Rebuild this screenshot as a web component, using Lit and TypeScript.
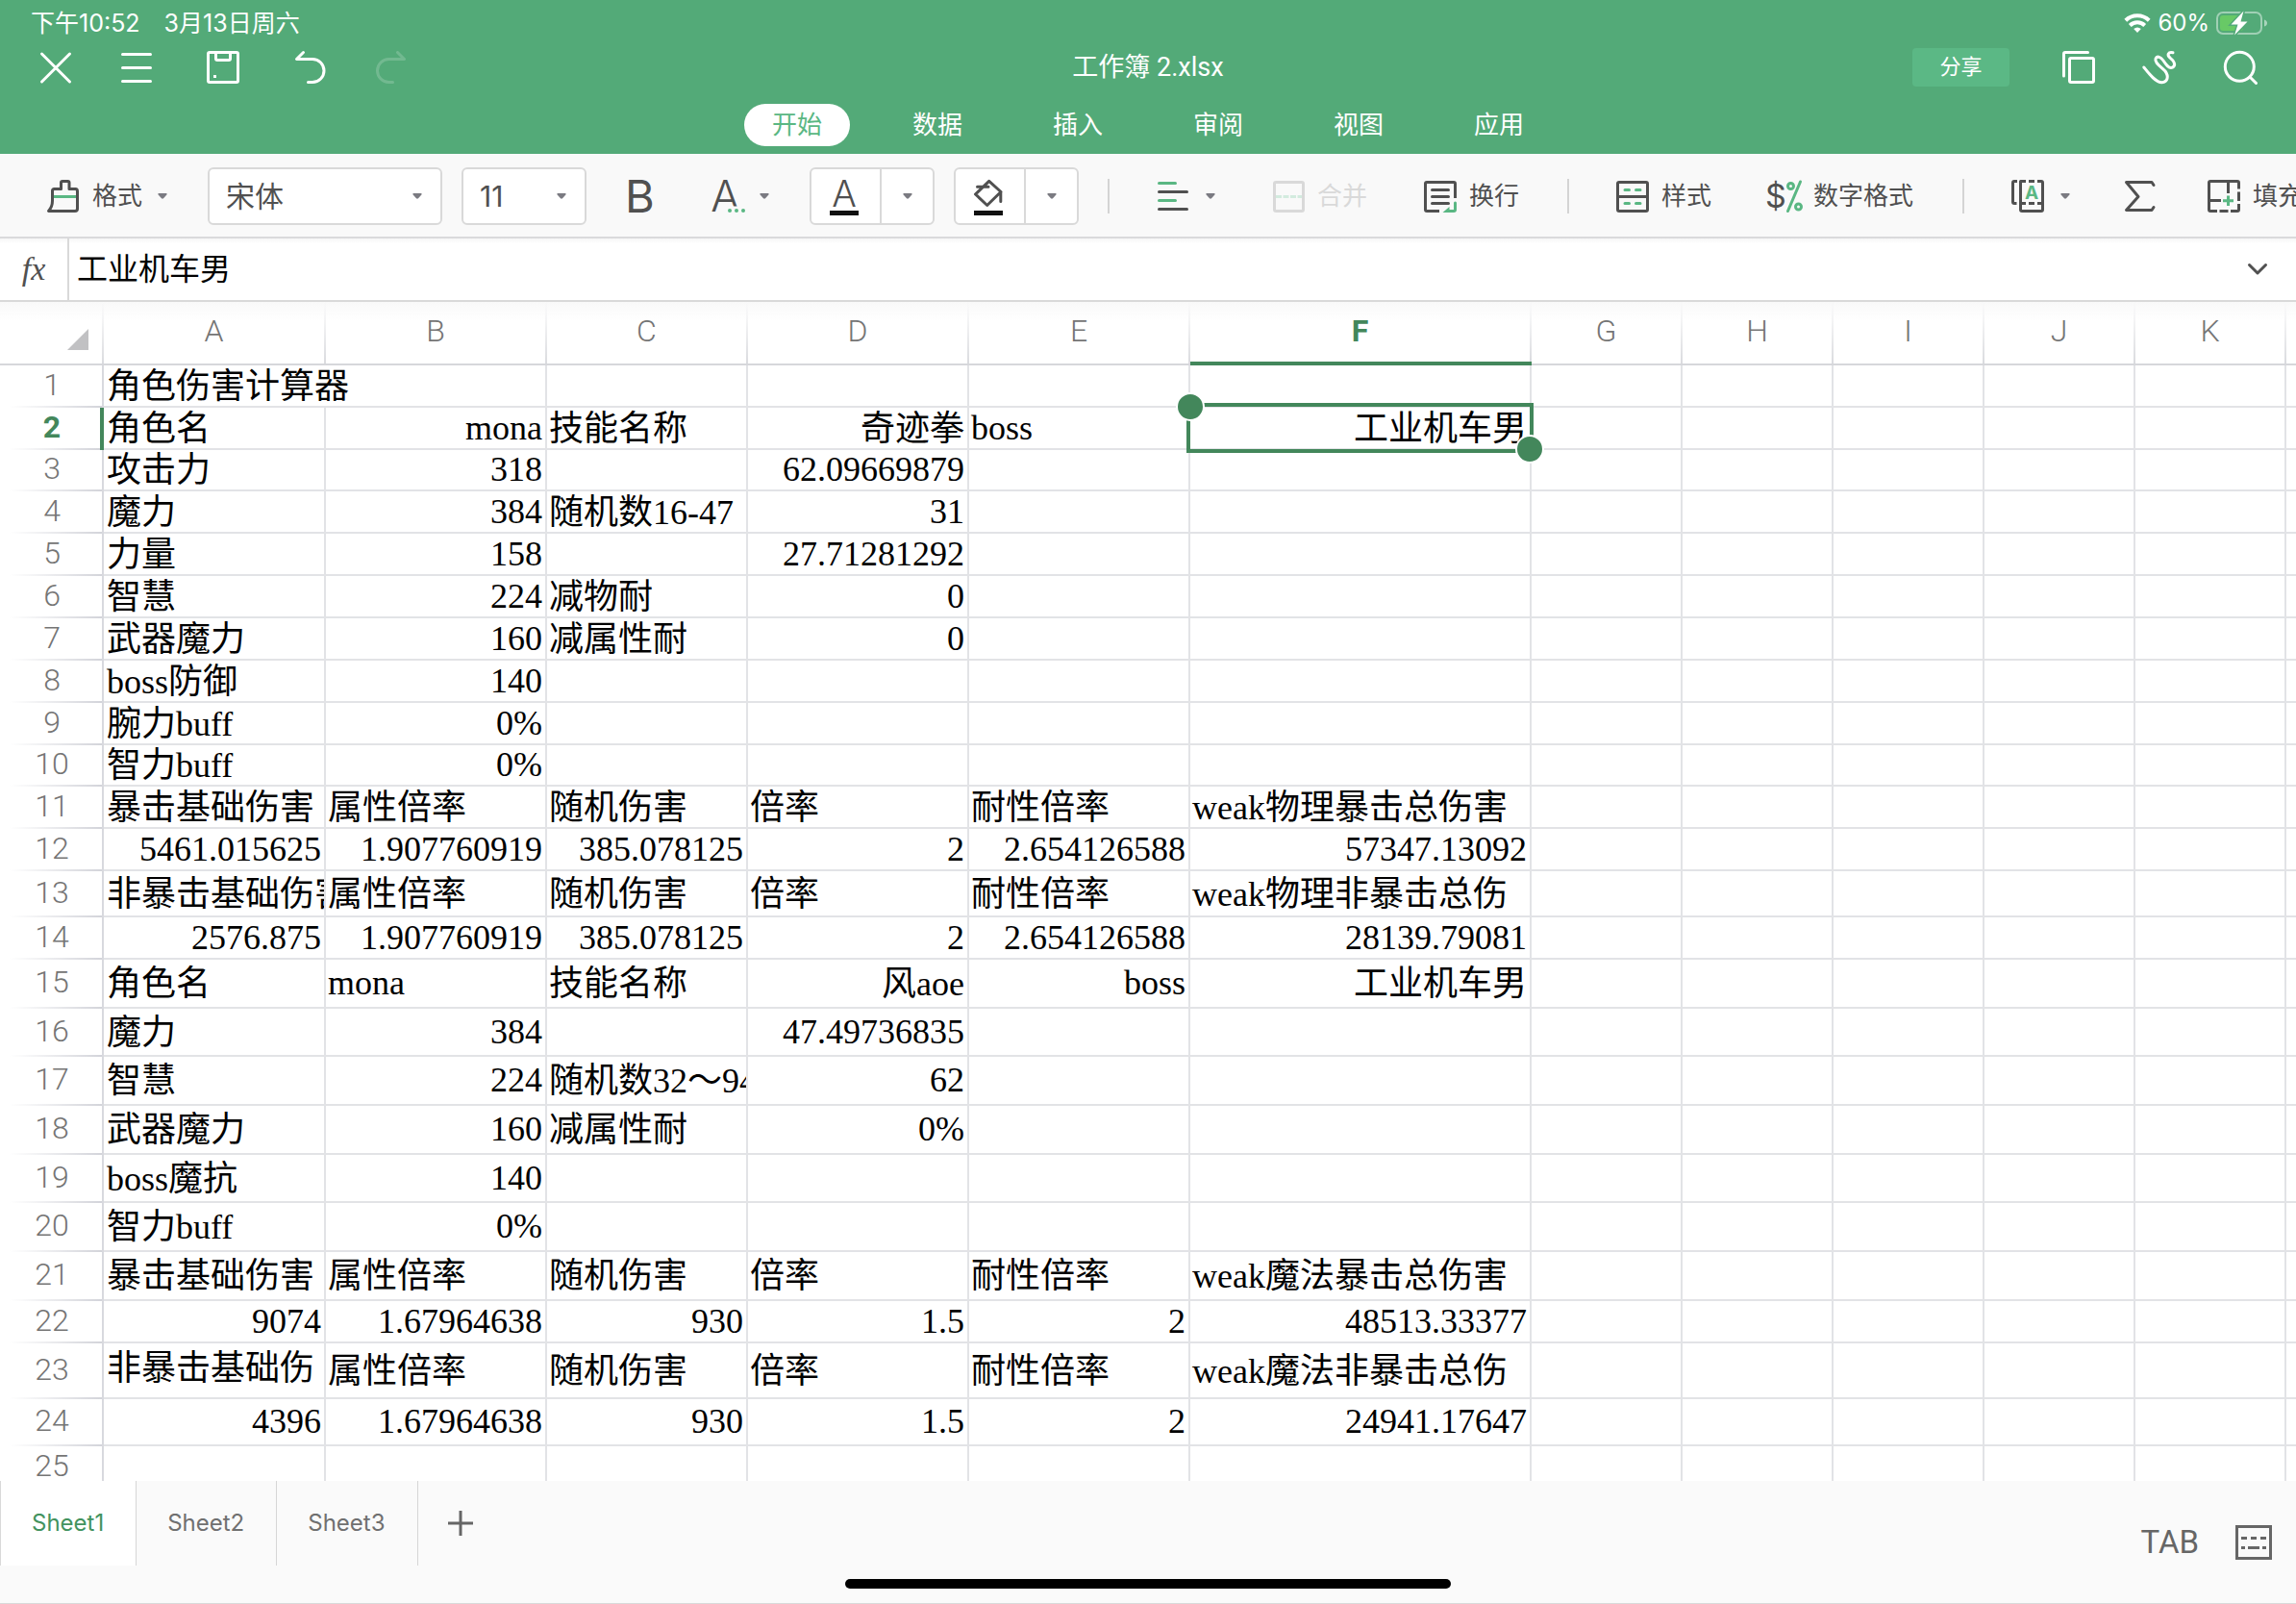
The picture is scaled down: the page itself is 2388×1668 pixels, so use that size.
import { LitElement, html, svg, css, nothing, TemplateResult } from "lit";
import { customElement, state } from "lit/decorators.js";
import { classMap } from "lit/directives/class-map.js";
import { styleMap } from "lit/directives/style-map.js";

type Cell = { t: string; kind: "text" | "num"; right?: boolean; wrap?: boolean; span?: number };
type Row = { h: number; cells: Record<string, Cell> };

const COLUMNS: { name: string; width: number | null }[] = [
  { name: "A", width: 231 },
  { name: "B", width: 230 },
  { name: "C", width: 209 },
  { name: "D", width: 230 },
  { name: "E", width: 230 },
  { name: "F", width: 355 },
  { name: "G", width: 157 },
  { name: "H", width: 157 },
  { name: "I", width: 157 },
  { name: "J", width: 157 },
  { name: "K", width: 157 },
  { name: "", width: null },
];

const L = (t: string): Cell => ({ t, kind: "text" });
const R = (t: string): Cell => ({ t, kind: "text", right: true });
const N = (t: string): Cell => ({ t, kind: "num", right: true });

const ROWS: Row[] = [
  { h: 44, cells: { A: { t: "角色伤害计算器", kind: "text", span: 2 } } },
  { h: 44, cells: { A: L("角色名"), B: N("mona"), C: L("技能名称"), D: R("奇迹拳"), E: { t: "boss", kind: "num" }, F: R("工业机车男") } },
  { h: 43, cells: { A: L("攻击力"), B: N("318"), D: N("62.09669879") } },
  { h: 44, cells: { A: L("魔力"), B: N("384"), C: L("随机数16-47"), D: N("31") } },
  { h: 44, cells: { A: L("力量"), B: N("158"), D: N("27.71281292") } },
  { h: 44, cells: { A: L("智慧"), B: N("224"), C: L("减物耐"), D: N("0") } },
  { h: 44, cells: { A: L("武器魔力"), B: N("160"), C: L("减属性耐"), D: N("0") } },
  { h: 44, cells: { A: L("boss防御"), B: N("140") } },
  { h: 44, cells: { A: L("腕力buff"), B: N("0%") } },
  { h: 43, cells: { A: L("智力buff"), B: N("0%") } },
  { h: 44, cells: { A: L("暴击基础伤害"), B: L("属性倍率"), C: L("随机伤害"), D: L("倍率"), E: L("耐性倍率"), F: L("weak物理暴击总伤害") } },
  { h: 44, cells: { A: N("5461.015625"), B: N("1.907760919"), C: N("385.078125"), D: N("2"), E: N("2.654126588"), F: N("57347.13092") } },
  { h: 48, cells: { A: L("非暴击基础伤害"), B: L("属性倍率"), C: L("随机伤害"), D: L("倍率"), E: L("耐性倍率"), F: L("weak物理非暴击总伤") } },
  { h: 44, cells: { A: N("2576.875"), B: N("1.907760919"), C: N("385.078125"), D: N("2"), E: N("2.654126588"), F: N("28139.79081") } },
  { h: 51, cells: { A: L("角色名"), B: { t: "mona", kind: "num" }, C: L("技能名称"), D: R("风aoe"), E: N("boss"), F: R("工业机车男") } },
  { h: 50, cells: { A: L("魔力"), B: N("384"), D: N("47.49736835") } },
  { h: 51, cells: { A: L("智慧"), B: N("224"), C: L("随机数32～94"), D: N("62") } },
  { h: 51, cells: { A: L("武器魔力"), B: N("160"), C: L("减属性耐"), D: N("0%") } },
  { h: 50, cells: { A: L("boss魔抗"), B: N("140") } },
  { h: 51, cells: { A: L("智力buff"), B: N("0%") } },
  { h: 51, cells: { A: L("暴击基础伤害"), B: L("属性倍率"), C: L("随机伤害"), D: L("倍率"), E: L("耐性倍率"), F: L("weak魔法暴击总伤害") } },
  { h: 44, cells: { A: N("9074"), B: N("1.67964638"), C: N("930"), D: N("1.5"), E: N("2"), F: N("48513.33377") } },
  { h: 58, cells: { A: { t: "非暴击基础伤", kind: "text", wrap: true }, B: L("属性倍率"), C: L("随机伤害"), D: L("倍率"), E: L("耐性倍率"), F: L("weak魔法非暴击总伤") } },
  { h: 49, cells: { A: N("4396"), B: N("1.67964638"), C: N("930"), D: N("1.5"), E: N("2"), F: N("24941.17647") } },
  { h: 44, cells: {} },
];

const GREEN = "#5ab783";

const icon = (body: TemplateResult, w = 36, h = 36) =>
  html`<svg class="icon" width=${w} height=${h} viewBox="0 0 ${w} ${h}" fill="none" stroke="currentColor"
    stroke-width="3" stroke-linecap="round" stroke-linejoin="round" aria-hidden="true">${body}</svg>`;

const caret = html`<svg class="caret" width="10" height="6" viewBox="0 0 10 6" aria-hidden="true">
  <path d="M1 0H9Q10.400 .6 9.400 1.600L6 5.300Q5 6 4 5.300L.6 1.600Q-.4 .6 1 0Z" fill="#7b7b82" /></svg>`;

const ICONS = {
  close: icon(svg`<path d="M3.500 4L32.500 33M32.500 4L3.500 33" />`),
  menu: icon(svg`<path d="M3.500 4.500H32.500M3.500 18.500H32.500M3.500 32.500H32.500" />`),
  save: icon(svg`<rect x="2.500" y="2.500" width="31" height="31" rx="1.500" />
    <path d="M10.500 3V9Q10.500 10.500 12 10.500H24Q25.500 10.500 25.500 9V3" />
    <rect x="8" y="26" width="3" height="3" fill="currentColor" stroke="none" />`),
  undo: icon(svg`<path d="M10.500 2.500L3.500 9.500H20A12 12 0 0 1 20 33.500H15.500" />`),
  redo: icon(svg`<path d="M25.500 2.500L32.500 9.500H16.500A12 12 0 0 0 16.500 33.500H20.500" />`),
  copy: icon(svg`<path d="M2.500 27V4Q2.500 2.500 4 2.500H27.500" />
    <rect x="8.500" y="8.500" width="25" height="25" rx="1.500" />`),
  scribble: icon(svg`<path d="M1.800 18C7 24.500 14 33.800 20.500 33.800C26.500 33.300 28 27.500 24 22C20 17.500 12.500 13.500 14 9C15.500 5.500 19.500 7.500 22 11C25 15.500 28 19.800 31.500 18.200C36 15.500 32.500 11 29 8.200C25.500 5 27 1.800 32 2.800" />`),
  search: icon(svg`<circle cx="17.300" cy="17.300" r="15" /><path d="M28.500 28.500L34.500 34.500" />`),
  brush: icon(svg`<path d="M24 10.500V4Q24 2.500 22.500 2.500H17Q15.500 2.500 15.500 4V10.500H8.500Q6.500 10.500 6.500 12.500V23Q6.500 29 2.500 33.500H30Q32.500 33.500 32.500 31V13Q32.500 10.500 30.500 10.500H24" />
    <path d="M8 18.500H31" stroke=${GREEN} stroke-linecap="butt" />`),
  bold: icon(svg`<text x="17.500" y="35" class="glyph" font-size="47" font-weight="400">B</text>`),
  effects: icon(svg`<text x="16.500" y="34" class="glyph" font-size="45" font-weight="300">A</text>
    <path d="M19 33H39" stroke="#f9f9f9" stroke-width="9" stroke-linecap="butt" />
    <g fill=${GREEN} stroke="none"><circle cx="21" cy="33" r="2" /><circle cx="28" cy="33" r="2" /><circle cx="35" cy="33" r="2" /></g>`),
  fontColor: icon(svg`<text x="18" y="31" class="glyph" font-size="38" font-weight="300">A</text>
    <rect x="3" y="35" width="30" height="5" fill="#111" stroke="none" />`, 36, 40),
  fill: icon(svg`<path d="M18.700 4.300L31 15.500L16.700 29.500L4.500 18Z M6.500 10.300H18 M30.800 16V25.500" />
    <rect x="3" y="35" width="30" height="5" fill="#111" stroke="none" />`, 36, 40),
  align: icon(svg`<path d="M3.500 4.500H20.500M3.500 22.500H20.500" stroke=${GREEN} /><path d="M3.500 13.500H32.500M3.500 31.500H32.500" />`),
  merge: icon(svg`<rect x="3.500" y="3.500" width="30" height="30" rx="1.500" />
    <path d="M5 18.500H32" stroke="#d3ebdf" stroke-dasharray="6 1.500" stroke-linecap="butt" />`),
  wrap: icon(svg`<path d="M17 33.500H4Q2.500 33.500 2.500 32V5Q2.500 3.500 4 3.500H32Q33.500 3.500 33.500 5V20" stroke-linecap="butt" />
    <path d="M9.500 11.500H26.500M9.500 18.500H26.500M9.500 25.500H26.500" />
    <path d="M33.500 25V32Q33.500 33.500 32 33.500H27" stroke=${GREEN} /><path d="M20.500 35L27.500 29V35Z" fill=${GREEN} stroke="none" />`),
  style: icon(svg`<rect x="2.500" y="3.500" width="31" height="30" rx="1.500" /><path d="M3 18.500H33" />
    <path d="M10 11.500H14.500M21.500 11.500H26M10 25.500H14.500M21.500 25.500H26" stroke=${GREEN} />`),
  numfmt: icon(svg`<text x="9" y="30" class="glyph" font-size="34">$</text>
    <g stroke=${GREEN}><path d="M34.500 3L21.500 33.500" /><circle cx="24.500" cy="7.500" r="3" /><circle cx="32.500" cy="29" r="3" /></g>`),
  frame: icon(svg`<g stroke-linecap="butt"><path d="M7 2.500H4Q2.500 2.500 2.500 4V24Q2.500 25.500 4 25.500H6.500" />
    <path d="M16 2.500H10.500V32Q10.500 33.500 12 33.500H32Q33.500 33.500 33.500 32V4Q33.500 2.500 32 2.500H28M19 2.500H25M10 25.500H16M19 25.500H25M28 25.500H34" /></g>
    <text x="22" y="21" class="glyph accent" font-size="19" font-weight="700">A</text>`),
  sum: icon(svg`<path d="M32 6.500L30 3.500H3.500L16 18.500L3.500 32.500H30L32 29.500" />`),
  fillSeries: icon(svg`<g stroke-linecap="butt"><path d="M11 33.500H4Q2.500 33.500 2.500 32V4Q2.500 2.500 4 2.500H32Q33.500 2.500 33.500 4V10.500M22.500 3V15M3 22.500H15" />
    <path d="M33.500 13.500V23M33.500 26V32Q33.500 33.500 32 33.500H25M13.500 33.500H22.500" />
    <path d="M22.500 17.500V28M17 22.800H28" stroke=${GREEN} /></g>`),
  chevron: html`<svg width="20" height="12" viewBox="0 0 20 12" fill="none" stroke="#505050" stroke-width="3" stroke-linecap="round" stroke-linejoin="round" aria-hidden="true"><path d="M1.500 1.500L10 10L18.500 1.500" /></svg>`,
  plus: html`<svg width="26" height="26" viewBox="0 0 26 26" stroke="#666" stroke-width="3" aria-hidden="true"><path d="M13 0V26M0 13H26" /></svg>`,
  keyboard: html`<svg width="38" height="36" viewBox="0 0 38 36" fill="none" stroke="#666" stroke-width="3" aria-hidden="true">
    <rect x="1.500" y="1.500" width="35" height="33" /><path d="M6 13.500H12M16 13.500H22M26 13.500H32M6 23.500H10M13 23.500H25M28 23.500H32" /></svg>`,
  wifi: html`<svg width="28" height="20" viewBox="0 0 28 20" fill="none" stroke="#fff" stroke-width="4" aria-hidden="true">
    <path d="M1.800 7.200A17.500 17.500 0 0 1 26.200 7.200M6.300 12.500A11 11 0 0 1 21.700 12.500" /><path d="M14 20L10.200 16Q14 12.800 17.800 16Z" fill="#fff" stroke="none" /></svg>`,
  battery: html`<svg width="54" height="26" viewBox="0 0 54 26" fill="none" aria-hidden="true">
    <rect x="1" y="2" width="46" height="22" rx="6" stroke="#fff" stroke-opacity=".45" stroke-width="2" />
    <rect x="4" y="5" width="24" height="16" rx="3" fill="#68c966" />
    <path d="M50 9.500Q53 10.500 53 13Q53 15.500 50 16.500Z" fill="#fff" fill-opacity=".5" />
    <path d="M28.500 .5L15.500 14.500H22.500L19 25.500L32.500 11.500H25.500Z" fill="#fff" stroke="#53aa78" stroke-width="3" paint-order="stroke" /></svg>`,
};

const base = css`
  * { box-sizing: border-box; }
  button, select, input {
    font: inherit; color: inherit; border: 0; padding: 0; margin: 0; background: none; border-radius: 0; outline: none;
  }
  button { display: flex; align-items: center; justify-content: flex-start; white-space: nowrap; }
  svg { display: block; flex: none; overflow: visible; }
  .glyph {
    font-family: Inter, Roboto, sans-serif; text-anchor: middle; fill: currentColor; stroke: none;
  }
  .glyph.accent { fill: #5ab783; }
`;

@customElement("sheet-titlebar")
class SheetTitlebar extends LitElement {
  @state() private active = "开始";

  static styles = [base, css`
    :host { display: block; background: #53aa78; color: #fff; padding-bottom: 8px; font: 26px/32px Roboto, "Noto Sans CJK SC", sans-serif; }
    .status { display: flex; align-items: center; height: 48px; padding: 0 29px 0 32px; font: 25px/32px Inter, "Noto Sans CJK SC", sans-serif; }
    .date { margin-left: 25px; flex: 1; }
    .power { display: flex; align-items: center; gap: 7px; font-size: 24px; }
    .row { display: grid; grid-template-columns: 1fr auto 1fr; align-items: center; height: 44px; padding: 0 40px; }
    .left { display: grid; grid-template-columns: 84px 90px 91px 83px 36px; }
    .right { display: flex; justify-content: flex-end; align-items: center; gap: 48px; }
    .title { margin: 0; font: inherit; font-size: 27px; }
    .share { width: 101px; height: 40px; margin-right: 6px; justify-content: center; border-radius: 4px; background: #5bb885; font-size: 22px; }
    .dim { opacity: 0.18; }
    .tabs { display: flex; justify-content: center; gap: 36px; margin-top: 16px; }
    .tab { width: 110px; height: 44px; justify-content: center; border-radius: 22px; }
    .tab.on { background: #fff; color: #5ab783; }
  `];

  render() {
    return html`
      <div class="status">
        <span>下午10:52</span><span class="date">3月13日周六</span>
        <span class="power">${ICONS.wifi}<span>60%</span>${ICONS.battery}</span>
      </div>
      <div class="row">
        <div class="left">
          <button aria-label="关闭">${ICONS.close}</button>
          <button aria-label="菜单">${ICONS.menu}</button>
          <button aria-label="保存">${ICONS.save}</button>
          <button aria-label="撤销">${ICONS.undo}</button>
          <button class="dim" aria-label="恢复" disabled>${ICONS.redo}</button>
        </div>
        <h1 class="title">工作簿 2.xlsx</h1>
        <div class="right">
          <button class="share">分享</button>
          <button aria-label="窗口">${ICONS.copy}</button>
          <button aria-label="涂鸦">${ICONS.scribble}</button>
          <button aria-label="搜索">${ICONS.search}</button>
        </div>
      </div>
      <nav class="tabs">
        ${["开始", "数据", "插入", "审阅", "视图", "应用"].map((t) => html`
          <button class=${classMap({ tab: true, on: t === this.active })} @click=${() => (this.active = t)}>${t}</button>`)}
      </nav>`;
  }
}

@customElement("sheet-toolbar")
class SheetToolbar extends LitElement {
  static styles = [base, css`
    :host {
      display: grid; align-items: center; height: 88px; padding: 2px 0 0 48px; overflow: hidden;
      grid-template-columns: 168px 264px 168px 90px 104px 150px 160px 50px 120px 158px 150px 50px 158px 203px 50px 117px 87px 1fr;
      background: #f9f9f9; border-bottom: 2px solid #dadadc; color: #505050;
      font: 26px/36px Roboto, "Noto Sans CJK SC", sans-serif;
    }
    .tool { gap: 12px; }
    .icon + .caret { margin-left: 4px; }
    .label + .caret { margin-left: 4px; }
    .pick { display: grid; align-items: center; height: 60px; border: 2px solid #d9d9d9; border-radius: 6px; background: #fff; }
    .pick > * { grid-area: 1 / 1; }
    .pick select { appearance: none; width: 100%; height: 100%; padding: 0 40px 0 17px; font: 30px/40px Inter, "Noto Sans CJK SC", sans-serif; }
    .pick .caret { justify-self: end; margin-right: 19px; pointer-events: none; }
    .family { width: 244px; }
    .size { width: 130px; }
    .split { display: grid; grid-template-columns: 71px 55px; width: 130px; height: 60px; border: 2px solid #d9d9d9; border-radius: 6px; background: #fff; }
    .split button { justify-content: center; }
    .split button:first-child { padding-right: 4px; }
    .split button + button { border-left: 2px solid #d9d9d9; }
    .rule { width: 2px; height: 36px; background: #d4d4d4; }
    .off { color: #d9d9d9; }
  `];

  render() {
    const tool = (ic: TemplateResult, label: string, drop = false, off = false) => html`
      <button class=${classMap({ tool: true, off })} ?disabled=${off}>${ic}<span class="label">${label}</span>${drop ? caret : nothing}</button>`;
    const iconTool = (ic: TemplateResult, name: string, drop = false) => html`
      <button class="tool" aria-label=${name}>${ic}${drop ? caret : nothing}</button>`;
    const split = (ic: TemplateResult, name: string) => html`
      <div class="split"><button aria-label=${name}>${ic}</button><button aria-label="${name}选项">${caret}</button></div>`;
    return html`
      ${tool(ICONS.brush, "格式", true)}
      <div class="pick family"><select aria-label="字体"><option>宋体</option></select>${caret}</div>
      <div class="pick size"><select aria-label="字号"><option>11</option></select>${caret}</div>
      ${iconTool(ICONS.bold, "加粗")}
      ${iconTool(ICONS.effects, "字体效果", true)}
      ${split(ICONS.fontColor, "字体颜色")}
      ${split(ICONS.fill, "填充颜色")}
      <span class="rule"></span>
      ${iconTool(ICONS.align, "对齐", true)}
      ${tool(ICONS.merge, "合并", false, true)}
      ${tool(ICONS.wrap, "换行")}
      <span class="rule"></span>
      ${tool(ICONS.style, "样式")}
      ${tool(ICONS.numfmt, "数字格式")}
      <span class="rule"></span>
      ${iconTool(ICONS.frame, "文本框", true)}
      ${iconTool(ICONS.sum, "求和")}
      ${tool(ICONS.fillSeries, "填充")}`;
  }
}

@customElement("sheet-grid")
class SheetGrid extends LitElement {
  static styles = [base, css`
    :host { display: block; min-height: 0; overflow: hidden; background: #fff; }
    table { width: 100%; table-layout: fixed; border-collapse: separate; border-spacing: 0; }
    .rowhead { width: 108px; }
    th { padding: 0; font: 300 32px/36px Roboto, "Liberation Sans", sans-serif; color: #757575; text-align: center; vertical-align: top; }
    thead th {
      height: 66px; padding: 12px 2px 0 0; border-bottom: 2px solid #d6d7db;
      background:
        linear-gradient(#e4e5e800, #dadbdf) right / 2px 100% no-repeat,
        linear-gradient(#f9f9f9, #fff 20px);
    }
    thead th.on { border-bottom: 4px solid #43875b; }
    th.on { color: #43875b; font-weight: 700; }
    thead .corner { padding: 28px 16px 0 0; }
    .corner svg { margin-left: auto; }
    tbody th {
      vertical-align: middle; border-right: 2px solid #d8d9de;
      background: linear-gradient(90deg, #fff 10px, #d3d4da) bottom / 100% 2px no-repeat;
    }
    tbody th.on { border-right: 4px solid #43875b; }
    .no { display: block; width: 108px; padding-bottom: 5px; }
    td {
      position: relative; padding: 0; border-right: 2px solid #e2e3e6; border-bottom: 2px solid #e2e3e6;
      font: 36px/41px "Liberation Serif", "Noto Sans CJK SC", serif; color: #000;
    }
    td:last-child, thead th:last-child { border-right: 0; }
    thead th:last-child { background: linear-gradient(#f9f9f9, #fff 20px); }
    .v { height: 41px; padding: 0 3px 0 2px; overflow: hidden; white-space: nowrap; }
    th + td .v { padding-left: 3px; }
    .v.text { line-height: 42px; }
    .v.right { text-align: right; }
    .v.wrap { margin-bottom: 6px; }
    .sel { position: absolute; z-index: 1; inset: -5px -4px -5px -4px; border: 4px solid #43875b; pointer-events: none; }
    .knob { position: absolute; width: 30px; height: 30px; border: 2px solid #fff; border-radius: 50%; background: #43875b; }
    .knob.start { left: -15px; top: -15px; }
    .knob.end { right: -15px; bottom: -15px; }
  `];

  @state() private row = 2;
  @state() private col = "F";

  private cells(r: Row, n: number) {
    const out: TemplateResult[] = [];
    for (let i = 0; i < COLUMNS.length; i++) {
      const name = COLUMNS[i].name;
      const c = r.cells[name];
      const selected = n === this.row && name === this.col;
      out.push(html`<td colspan=${c?.span ?? 1} @click=${() => { this.row = n; this.col = name; }}>
        ${c ? html`<div class=${classMap({ v: true, text: c.kind === "text", right: !!c.right, wrap: !!c.wrap })}>${c.t}</div>` : nothing}
        ${selected ? html`<div class="sel"><span class="knob start"></span><span class="knob end"></span></div>` : nothing}
      </td>`);
      if (c?.span) i += c.span - 1;
    }
    return out;
  }

  render() {
    return html`<table>
      <colgroup>
        <col class="rowhead" />
        ${COLUMNS.map((c) => html`<col style=${styleMap(c.width ? { width: `${c.width}px` } : {})} />`)}
      </colgroup>
      <thead><tr>
        <th class="corner"><svg width="22" height="22" viewBox="0 0 22 22" aria-hidden="true"><path d="M22 0V22H0Z" fill="#c1c1c3" /></svg></th>
        ${COLUMNS.map((c) => html`<th class=${classMap({ on: c.name === this.col })} scope="col">${c.name}</th>`)}
      </tr></thead>
      <tbody>
        ${ROWS.map((r, i) => html`<tr style=${styleMap({ height: `${r.h}px` })}>
          <th class=${classMap({ on: i + 1 === this.row })} scope="row"><span class="no">${i + 1}</span></th>
          ${this.cells(r, i + 1)}
        </tr>`)}
      </tbody>
    </table>`;
  }
}

@customElement("sheet-footer")
class SheetFooter extends LitElement {
  @state() private active = "Sheet1";

  static styles = [base, css`
    :host { display: flex; position: relative; height: 128px; background: #fafafa; border-bottom: 1px solid #d9d9d9; color: #707070; }
    .tabs { display: flex; flex: 1; height: 88px; border-left: 1px solid #d9d9d9; }
    .tab { padding: 0 33px 0 32px; border-right: 1px solid #d6d6d6; font: 24px/32px Inter, sans-serif; }
    .tab.on { background: #fff; color: #43935f; }
    .add { padding: 0 31px; }
    .keys { display: flex; align-items: center; gap: 38px; height: 128px; padding-right: 25px; }
    .key { font: 33px/40px Roboto, sans-serif; color: #666; }
    .home { position: absolute; left: 50%; bottom: 15px; width: 630px; height: 10px; margin-left: -315px; border-radius: 5px; background: #000; }
  `];

  render() {
    return html`
      <div class="tabs">
        ${["Sheet1", "Sheet2", "Sheet3"].map((t) => html`
          <button class=${classMap({ tab: true, on: t === this.active })} @click=${() => (this.active = t)}>${t}</button>`)}
        <button class="add" aria-label="新建工作表">${ICONS.plus}</button>
      </div>
      <div class="keys">
        <button class="key">TAB</button>
        <button aria-label="键盘">${ICONS.keyboard}</button>
      </div>
      <div class="home"></div>`;
  }
}

@customElement("app-root")
class AppRoot extends LitElement {
  static styles = [base, css`
    :host { display: flex; flex-direction: column; height: 100vh; overflow: hidden; background: #fff; }
    .grid { flex: 1; }
    .formula { display: flex; align-items: stretch; height: 66px; border-bottom: 2px solid #d9d9d9; background: linear-gradient(#f6f6f6, #fff 5px); }
    .fx { width: 72px; display: flex; align-items: center; justify-content: center; border-right: 2px solid #d9d9d9; font: italic 34px/40px "Liberation Serif", serif; color: #505050; }
    .value { flex: 1; min-width: 0; padding: 0 9px 6px 8px; font: 32px/40px "Noto Sans CJK SC", sans-serif; color: #000; }
    .expand { padding: 0 30px; }
  `];

  render() {
    return html`
      <sheet-titlebar></sheet-titlebar>
      <sheet-toolbar></sheet-toolbar>
      <div class="formula">
        <label class="fx" for="fx">fx</label>
        <input class="value" id="fx" type="text" value="工业机车男" />
        <button class="expand" aria-label="展开">${ICONS.chevron}</button>
      </div>
      <sheet-grid class="grid"></sheet-grid>
      <sheet-footer></sheet-footer>`;
  }
}
